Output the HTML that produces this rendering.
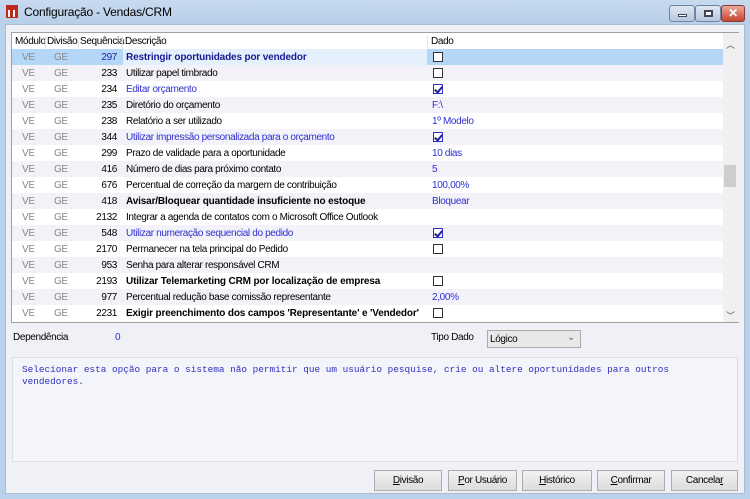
<!DOCTYPE html>
<html><head><meta charset="utf-8"><style>
*{margin:0;padding:0;box-sizing:border-box}
body{width:750px;height:499px;overflow:hidden;background:#b9d1ea;font-family:"Liberation Sans",Tahoma,sans-serif;font-size:10px;letter-spacing:-0.35px;position:relative}
.title{position:absolute;left:0;top:0;width:750px;height:24px;background:linear-gradient(#c7daef,#b8cfe8)}
.title span{position:absolute;left:24px;top:5px;font-size:12px;letter-spacing:-0.2px;color:#000}
.client{position:absolute;left:5px;top:24px;width:740px;height:470px;background:#f0f1f7;border:1px solid #a9bcd2}
.grid{position:absolute;left:11px;top:32px;width:728px;height:291px;background:#fff;border:1px solid #a0a0a0}
.hdr{position:absolute;left:0;top:0;height:16px;width:711px;background:#fff}
.hdr div{position:absolute;top:3px;color:#000}
.hsep{position:absolute;top:0;width:1px;height:16px;background:#e2e2e2}
.row{position:absolute;left:0;width:711px;height:16px}
.row.s{background:#f2f2f8}
.row div{position:absolute;top:3px;white-space:nowrap}
.m{left:10px;color:#888}.d{left:42px;color:#888}.q{right:606px;color:#000;text-align:right}
.t{left:114px}.v{left:420px;color:#2f2fd0}
.b{font-weight:bold;letter-spacing:-0.15px}.bl{color:#2f2fd0}
.cb{position:absolute;left:421px;top:3px;width:10px;height:10px;border:1px solid #333;background:#fff}
.cb.c{border-color:#2f2fd0}
.cb.c:after{content:"";position:absolute;left:2px;top:0px;width:3px;height:6px;border:solid #2020a0;border-width:0 2px 2px 0;transform:rotate(40deg)}
.sb{position:absolute;left:711px;top:0;width:16px;height:289px;background:#f0f0f0}
.thumb{position:absolute;left:1px;top:132px;width:12px;height:22px;background:#cdcdcd}
.btn{position:absolute;top:470px;height:21px;border:1px solid #acacac;background:linear-gradient(#f2f2f2,#dcdcdc);text-align:center;line-height:19px}
.memo{position:absolute;left:12px;top:357px;width:726px;height:105px;background:#f4f5fa;border:1px solid #dcdde3;font-family:"Liberation Mono",monospace;font-size:9.4px;letter-spacing:0;color:#3030c0;padding:6px 9px;line-height:12px;white-space:nowrap}
</style></head><body>
<div class="title">
<div style="position:absolute;left:6px;top:5px;width:12px;height:13px;background:#c0281c"></div>
<div style="position:absolute;left:8px;top:10px;width:2px;height:7px;background:#fff"></div>
<div style="position:absolute;left:13px;top:10px;width:2px;height:7px;background:#fff"></div>
<span>Configuração - Vendas/CRM</span>
<div style="position:absolute;left:669px;top:5px;width:26px;height:17px;border:1px solid #6d84a6;border-radius:3px;background:linear-gradient(#dfe8f3,#b6c7dc)"><div style="position:absolute;left:8px;top:8px;width:9px;height:3px;background:#fff;border:1px solid #445"></div></div>
<div style="position:absolute;left:695px;top:5px;width:26px;height:17px;border:1px solid #6d84a6;border-radius:3px;background:linear-gradient(#dfe8f3,#b6c7dc)"><div style="position:absolute;left:8px;top:4px;width:9px;height:7px;border:2px solid #445;background:#fff"></div></div>
<div style="position:absolute;left:721px;top:5px;width:24px;height:17px;border:1px solid #8a3a30;border-radius:3px;background:linear-gradient(#e9a99a,#c8442f);color:#fff;font-weight:bold;text-align:center;line-height:15px;font-size:12px">✕</div>
</div>
<div class="client"></div>
<div class="grid">
<div class="hdr">
<div style="left:3px">Módulo</div><div class="hsep" style="left:33px"></div>
<div style="left:35px">Divisão</div><div class="hsep" style="left:66px"></div>
<div style="left:68px">Sequência</div><div class="hsep" style="left:110px"></div>
<div style="left:113px">Descrição</div><div class="hsep" style="left:415px"></div>
<div style="left:419px">Dado</div>
</div>
<div class="row" style="top:16px;background:#b4d7f8"><div style="position:absolute;left:111px;top:0;width:304px;height:16px;background:#e4f0fc"></div><div class="m">VE</div><div class="d">GE</div><div class="q" style="color:#2020a0">297</div><div class="t b" style="color:#1a1a90">Restringir oportunidades por vendedor</div><span class="cb"></span></div>
<div class="row s" style="top:32px"><div class="m">VE</div><div class="d">GE</div><div class="q">233</div><div class="t">Utilizar papel timbrado</div><span class="cb"></span></div>
<div class="row" style="top:48px"><div class="m">VE</div><div class="d">GE</div><div class="q">234</div><div class="t bl">Editar orçamento</div><span class="cb c"></span></div>
<div class="row s" style="top:64px"><div class="m">VE</div><div class="d">GE</div><div class="q">235</div><div class="t">Diretório do orçamento</div><div class="v">F:\</div></div>
<div class="row" style="top:80px"><div class="m">VE</div><div class="d">GE</div><div class="q">238</div><div class="t">Relatório a ser utilizado</div><div class="v">1º Modelo</div></div>
<div class="row s" style="top:96px"><div class="m">VE</div><div class="d">GE</div><div class="q">344</div><div class="t bl">Utilizar impressão personalizada para o orçamento</div><span class="cb c"></span></div>
<div class="row" style="top:112px"><div class="m">VE</div><div class="d">GE</div><div class="q">299</div><div class="t">Prazo de validade para a oportunidade</div><div class="v">10 dias</div></div>
<div class="row s" style="top:128px"><div class="m">VE</div><div class="d">GE</div><div class="q">416</div><div class="t">Número de dias para próximo contato</div><div class="v">5</div></div>
<div class="row" style="top:144px"><div class="m">VE</div><div class="d">GE</div><div class="q">676</div><div class="t">Percentual de correção da margem de contribuição</div><div class="v">100,00%</div></div>
<div class="row s" style="top:160px"><div class="m">VE</div><div class="d">GE</div><div class="q">418</div><div class="t b">Avisar/Bloquear quantidade insuficiente no estoque</div><div class="v">Bloquear</div></div>
<div class="row" style="top:176px"><div class="m">VE</div><div class="d">GE</div><div class="q">2132</div><div class="t">Integrar a agenda de contatos com o Microsoft Office Outlook</div></div>
<div class="row s" style="top:192px"><div class="m">VE</div><div class="d">GE</div><div class="q">548</div><div class="t bl">Utilizar numeração sequencial do pedido</div><span class="cb c"></span></div>
<div class="row" style="top:208px"><div class="m">VE</div><div class="d">GE</div><div class="q">2170</div><div class="t">Permanecer na tela principal do Pedido</div><span class="cb"></span></div>
<div class="row s" style="top:224px"><div class="m">VE</div><div class="d">GE</div><div class="q">953</div><div class="t">Senha para alterar responsável CRM</div></div>
<div class="row" style="top:240px"><div class="m">VE</div><div class="d">GE</div><div class="q">2193</div><div class="t b">Utilizar Telemarketing CRM por localização de empresa</div><span class="cb"></span></div>
<div class="row s" style="top:256px"><div class="m">VE</div><div class="d">GE</div><div class="q">977</div><div class="t">Percentual redução base comissão representante</div><div class="v">2,00%</div></div>
<div class="row" style="top:272px"><div class="m">VE</div><div class="d">GE</div><div class="q">2231</div><div class="t b">Exigir preenchimento dos campos 'Representante' e 'Vendedor'</div><span class="cb"></span></div>
<div class="sb"><div style="position:absolute;left:3px;top:5px;font-size:9px;color:#555">︿</div><div class="thumb"></div><div style="position:absolute;left:3px;top:276px;font-size:9px;color:#555">﹀</div></div>
</div>
<div style="position:absolute;left:13px;top:332px">Dependência</div>
<div style="position:absolute;left:115px;top:332px;color:#2f2fd0">0</div>
<div style="position:absolute;left:431px;top:332px">Tipo Dado</div>
<div style="position:absolute;left:487px;top:330px;width:94px;height:18px;border:1px solid #acacac;background:#e8e8e8;padding:3px 0 0 2px">Lógico<span style="position:absolute;right:5px;top:1px;color:#666">⌄</span></div>
<div class="memo">Selecionar esta opção para o sistema não permitir que um usuário pesquise, crie ou altere oportunidades para outros<br>vendedores.</div>
<div class="btn" style="left:374px;width:68px"><u>D</u>ivisão</div>
<div class="btn" style="left:448px;width:69px"><u>P</u>or Usuário</div>
<div class="btn" style="left:522px;width:70px"><u>H</u>istórico</div>
<div class="btn" style="left:597px;width:68px"><u>C</u>onfirmar</div>
<div class="btn" style="left:671px;width:67px">Cancela<u>r</u></div>
</body></html>
